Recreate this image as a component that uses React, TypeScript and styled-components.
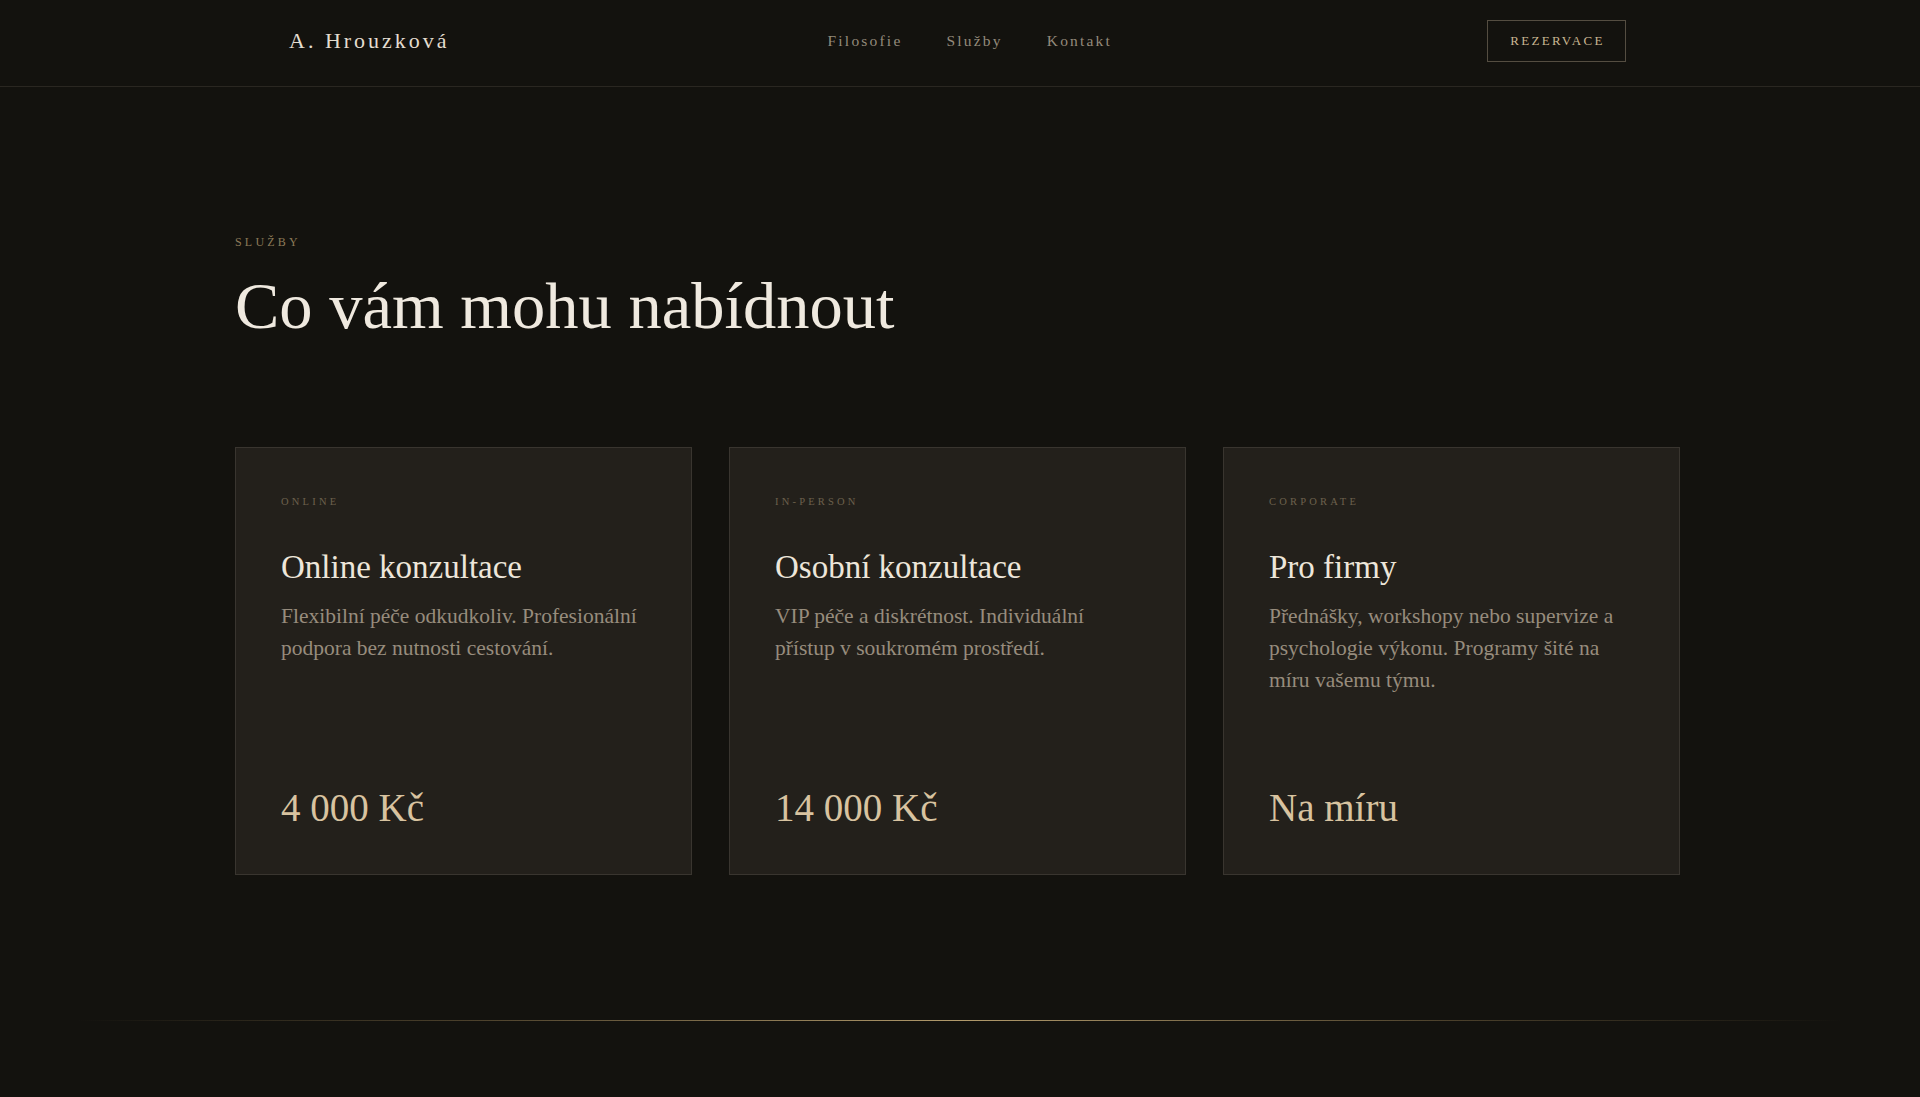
import React from "react";
import styled, { createGlobalStyle } from "styled-components";

const Global = createGlobalStyle`
  html, body { margin: 0; padding: 0; background: #13120e; }
  body { font-family: "Liberation Serif", "Times New Roman", serif; min-height: 100vh; }
  * { box-sizing: border-box; }
`;

const Page = styled.div`
  min-height: 100vh;
  background: #13120e;
  color: #ebe4d8;
  display: flex;
  flex-direction: column;
`;

const Header = styled.header`
  height: 87px;
  border-bottom: 1px solid #2a2721;
  display: flex;
  align-items: center;
  padding: 0 294px 5px 289px;
`;

const HeaderInner = styled.div`
  flex: 1;
  display: flex;
  align-items: center;
  justify-content: space-between;
`;

const Logo = styled.div`
  font-size: 22px;
  letter-spacing: 3px;
  color: #e4ddd0;
`;

const NavLinks = styled.nav`
  display: flex;
  gap: 44px;
  margin-left: 3px;
`;

const NavLink = styled.a`
  font-size: 15.5px;
  letter-spacing: 2.2px;
  color: #938a7b;
  text-decoration: none;
`;

const Button = styled.button`
  width: 139px;
  height: 42px;
  background: transparent;
  border: 1px solid #544d41;
  color: #c9b692;
  font-family: inherit;
  font-size: 13px;
  letter-spacing: 2.3px;
  padding: 0 0 0 2px;
`;

const Main = styled.main`
  margin: 0 240px 0 235px;
  padding-top: 147px;
`;

const Eyebrow = styled.div`
  font-size: 12px;
  line-height: 17px;
  letter-spacing: 3.2px;
  color: #8c7a58;
`;

const Heading = styled.h1`
  margin: 18px 0 0;
  font-weight: 400;
  font-size: 66.5px;
  line-height: 73px;
  color: #efe9df;
`;

const Grid = styled.div`
  margin-top: 105px;
  display: grid;
  grid-template-columns: repeat(3, 1fr);
  gap: 37px;
`;

const Card = styled.article`
  height: 428px;
  background: #23201b;
  border: 1px solid #39352f;
  padding: 46px 45px 46px;
  display: flex;
  flex-direction: column;
`;

const CardTag = styled.div`
  font-size: 10.5px;
  line-height: 15px;
  letter-spacing: 3.2px;
  color: #6d614d;
`;

const CardTitle = styled.h2`
  margin: 38px 0 0;
  font-weight: 400;
  font-size: 33px;
  line-height: 40px;
  color: #ede6da;
`;

const CardText = styled.p`
  margin: 13px 0 0;
  max-width: 362px;
  font-size: 21.5px;
  line-height: 32px;
  color: #978c7d;
`;

const Price = styled.div`
  margin-top: auto;
  font-size: 39px;
  line-height: 40px;
  color: #d8c3a0;
`;

const Divider = styled.div`
  margin-top: 145px;
  height: 1px;
  background: linear-gradient(
    90deg,
    rgba(184, 154, 100, 0) 4%,
    rgba(184, 154, 100, 0.35) 25%,
    rgba(196, 170, 118, 0.9) 50%,
    rgba(184, 154, 100, 0.35) 75%,
    rgba(184, 154, 100, 0) 96%
  );
`;

const services = [
  {
    tag: "ONLINE",
    title: "Online konzultace",
    text: "Flexibilní péče odkudkoliv. Profesionální podpora bez nutnosti cestování.",
    price: "4 000 Kč",
  },
  {
    tag: "IN-PERSON",
    title: "Osobní konzultace",
    text: "VIP péče a diskrétnost. Individuální přístup v soukromém prostředí.",
    price: "14 000 Kč",
  },
  {
    tag: "CORPORATE",
    title: "Pro firmy",
    text: "Přednášky, workshopy nebo supervize a psychologie výkonu. Programy šité na míru vašemu týmu.",
    price: "Na míru",
  },
];

export default function App() {
  return (
    <Page>
      <Global />
      <Header>
        <HeaderInner>
          <Logo>A. Hrouzková</Logo>
          <NavLinks>
            <NavLink href="#">Filosofie</NavLink>
            <NavLink href="#">Služby</NavLink>
            <NavLink href="#">Kontakt</NavLink>
          </NavLinks>
          <Button>REZERVACE</Button>
        </HeaderInner>
      </Header>
      <Main>
        <Eyebrow>SLUŽBY</Eyebrow>
        <Heading>Co vám mohu nabídnout</Heading>
        <Grid>
          {services.map((s) => (
            <Card key={s.tag}>
              <CardTag>{s.tag}</CardTag>
              <CardTitle>{s.title}</CardTitle>
              <CardText>{s.text}</CardText>
              <Price>{s.price}</Price>
            </Card>
          ))}
        </Grid>
      </Main>
      <Divider />
    </Page>
  );
}
